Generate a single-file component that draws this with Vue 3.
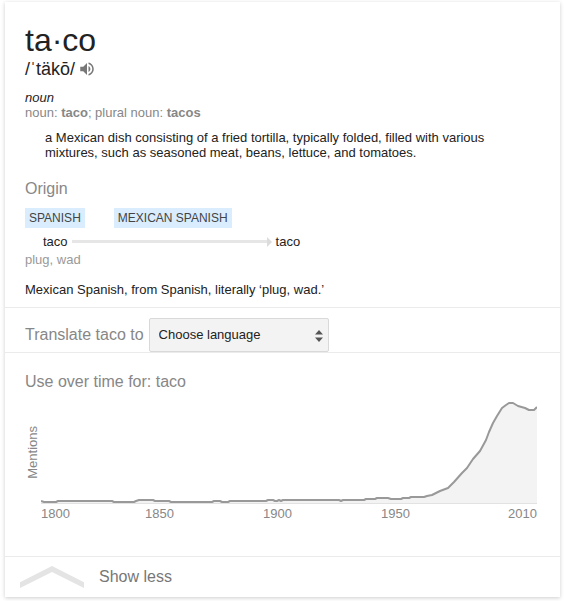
<script setup>
import { ref } from 'vue'

const language = ref('')
const languages = ['French', 'German', 'Italian', 'Portuguese', 'Spanish']
const expanded = ref(true)

const years = [1800, 1850, 1900, 1950, 2010]

// Mentions over time: [horizontal position, height above the axis]
const mentions = [
  [0, 2], [3, 1], [15, 1], [17, 2], [71, 2], [73, 1], [93, 1], [95, 2], [98, 3],
  [112, 3], [114, 2], [128, 2], [130, 1], [171, 1], [173, 2], [179, 2], [181, 1],
  [187, 1], [189, 2], [225, 2], [227, 3], [232, 3], [234, 2], [236, 2], [238, 3],
  [240, 2], [242, 3], [298, 3], [300, 2], [302, 3], [323, 3], [325, 4], [334, 4],
  [336, 5], [347, 5], [350, 4], [360, 4], [362, 5], [368, 5], [370, 6], [383, 6],
  [386, 7], [391, 8], [399, 12], [407, 15], [413, 21], [421, 30], [426, 35],
  [432, 44], [439, 52], [445, 63], [448, 71], [452, 80], [456, 87], [461, 95],
  [465, 98], [468, 100], [472, 100], [477, 97], [484, 95], [488, 93], [493, 93], [496, 96]
]
const line = mentions.map(([x, v]) => `${x},${104 - v - 1}`).join(' ')
const area = `0,103 ${line} 496,103`
</script>

<template>
  <main class="card">
    <section class="entry">
      <h1 class="word">ta·co</h1>
      <div class="phonetic">
        <span>/ˈtäkō/</span>
        <button class="speak" type="button" aria-label="Listen">
          <svg viewBox="0 0 24 24" width="18" height="18" fill="#777">
            <path d="M3 9v6h4l5 5V4L7 9H3zm13.5 3c0-1.77-1.02-3.29-2.5-4.03v8.05c1.48-.73 2.5-2.25 2.5-4.02zM14 3.23v2.06c2.89.86 5 3.54 5 6.71s-2.11 5.85-5 6.71v2.06c4.01-.91 7-4.49 7-8.77s-2.99-7.86-7-8.77z" />
          </svg>
        </button>
      </div>
      <div class="pos">noun</div>
      <div class="forms">noun: <b>taco</b>; plural noun: <b>tacos</b></div>
      <p class="definition">
        a Mexican dish consisting of a fried tortilla, typically folded, filled with various mixtures, such as seasoned meat, beans, lettuce, and tomatoes.
      </p>

      <h2 class="heading origin-heading">Origin</h2>
      <div class="tags">
        <span class="tag">SPANISH</span>
        <span class="tag">MEXICAN SPANISH</span>
      </div>
      <div class="path">
        <span>taco</span>
        <span class="arrow"></span>
        <span>taco</span>
      </div>
      <div class="gloss">plug, wad</div>
      <p class="etymology">Mexican Spanish, from Spanish, literally ‘plug, wad.’</p>
    </section>

    <section class="translate">
      <label class="heading" for="language">Translate taco to</label>
      <div class="picker">
        <select id="language" v-model="language">
          <option value="">Choose language</option>
          <option v-for="l in languages" :key="l" :value="l">{{ l }}</option>
        </select>
        <svg class="spinner" viewBox="0 0 8 12" width="8" height="12" fill="#555">
          <path d="M4 0L8 4.5H0zM4 12L0 7.5H8z" />
        </svg>
      </div>
    </section>

    <section class="usage">
      <h2 class="heading">Use over time for: taco</h2>
      <div class="chart">
        <span class="axis-title">Mentions</span>
        <svg class="plot" viewBox="0 0 496 104" preserveAspectRatio="none">
          <polygon :points="area" fill="#f3f3f3" />
          <path d="M0 103.5H496" stroke="#e2e2e2" vector-effect="non-scaling-stroke" />
          <polyline :points="line" fill="none" stroke="#999" stroke-width="2" stroke-linejoin="round" vector-effect="non-scaling-stroke" />
        </svg>
        <div class="years">
          <span v-for="y in years" :key="y">{{ y }}</span>
        </div>
      </div>
    </section>

    <button class="toggle" type="button" :aria-expanded="expanded" @click="expanded = !expanded">
      <svg viewBox="0 0 64 22" width="64" height="22" fill="#e4e4e4">
        <path d="M0 16.3L32 0L64 16.3V22L32 6L0 22z" />
      </svg>
      <span>Show less</span>
    </button>
  </main>
</template>

<style>
body {
  margin: 0;
  background: #fff;
}
</style>

<style scoped>
.card {
  margin: 2px 5px 4px;
  background: #fff;
  box-shadow: 0 1px 4px rgba(0, 0, 0, 0.2);
  font: 13px/15px "Liberation Sans", Arial, sans-serif;
  color: #222;
}

.card h1,
.card h2,
.card p {
  margin: 0;
  font-weight: normal;
}

.card button {
  border: 0;
  background: none;
  cursor: pointer;
}

.card svg {
  display: block;
}

.card .heading {
  font-size: 16px;
  line-height: 18px;
  color: #878787;
}

.entry {
  padding: 20px 20px 10px;
  border-bottom: 1px solid #ebebeb;
}

.word {
  font-size: 32px;
  line-height: 36px;
}

.phonetic {
  display: flex;
  align-items: center;
  gap: 3px;
  font-size: 18px;
  line-height: 22px;
}

.speak {
  padding: 0;
}

.pos {
  margin-top: 10px;
  font-style: italic;
}

.forms {
  color: #878787;
}

.card .definition {
  margin: 10px 20px 20px;
}

.tags {
  display: flex;
  gap: 29px;
  margin-top: 10px;
}

.tag {
  padding: 0 4px;
  background: #d9edff;
  font-size: 12px;
  line-height: 20px;
  color: #444;
}

.path {
  display: flex;
  align-items: center;
  gap: 4px;
  margin-top: 6px;
  padding-left: 18px;
}

.arrow {
  display: flex;
  align-items: center;
  width: 200px;
}

.arrow::before {
  content: "";
  flex: 1;
  height: 3px;
  background: #e6e6e6;
}

.arrow::after {
  content: "";
  border: solid transparent;
  border-width: 5px 0 5px 5px;
  border-left-color: #dcdcdc;
}

.gloss {
  margin-top: 3px;
  color: #999;
}

.card .etymology {
  margin-top: 15px;
}

.translate {
  display: flex;
  align-items: center;
  gap: 5px;
  padding: 10px 20px 0;
  border-bottom: 1px solid #ebebeb;
}

.picker {
  position: relative;
  width: 180px;
}

.picker select {
  display: block;
  box-sizing: border-box;
  width: 100%;
  height: 34px;
  padding: 0 24px 1px 9px;
  border: 1px solid #d9d9d9;
  border-radius: 2px;
  background: #f3f3f3;
  font: inherit;
  color: #222;
  appearance: none;
}

.spinner {
  position: absolute;
  top: 12px;
  right: 6px;
  pointer-events: none;
}

.usage {
  padding: 20px 23px 35px 20px;
  border-bottom: 1px solid #ebebeb;
}

.chart {
  display: grid;
  grid-template-columns: 15px 1fr;
  column-gap: 1px;
  row-gap: 2px;
  margin-top: 9px;
  color: #878787;
}

.axis-title {
  place-self: center;
  writing-mode: vertical-rl;
  transform: rotate(180deg);
}

.plot {
  width: 100%;
  height: 104px;
}

.years {
  grid-column: 2;
  display: grid;
  grid-template-columns: 104fr 118fr 118fr 127fr 29fr;
}

.toggle {
  display: flex;
  align-items: center;
  gap: 15px;
  width: 100%;
  height: 40px;
  padding: 0 15px;
  font: 16px/18px "Liberation Sans", Arial, sans-serif;
  color: #777;
}
</style>
